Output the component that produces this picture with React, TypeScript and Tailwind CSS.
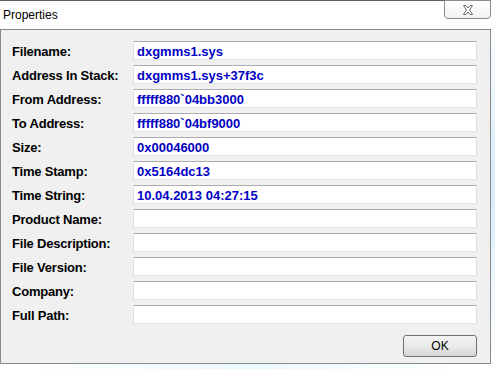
const rows: [string, string][] = [
  ["Filename:", "dxgmms1.sys"],
  ["Address In Stack:", "dxgmms1.sys+37f3c"],
  ["From Address:", "fffff880`04bb3000"],
  ["To Address:", "fffff880`04bf9000"],
  ["Size:", "0x00046000"],
  ["Time Stamp:", "0x5164dc13"],
  ["Time String:", "10.04.2013 04:27:15"],
  ["Product Name:", ""],
  ["File Description:", ""],
  ["File Version:", ""],
  ["Company:", ""],
  ["Full Path:", ""],
];

function CloseGlyph() {
  return (
    <svg width="12" height="10" viewBox="0 0 12 10">
      <path
        d="M1.5 0.5 H4 L6 3 L8 0.5 H10.5 L7.5 5 L10.5 9.5 H8 L6 7 L4 9.5 H1.5 L4.5 5 Z"
        fill="#ffffff"
        stroke="#6b6b6b"
        strokeWidth="1"
        strokeLinejoin="round"
      />
    </svg>
  );
}

export default function App() {
  return (
    <div className="w-[495px] h-[369px] bg-white overflow-hidden font-['Liberation_Sans',Arial,sans-serif] flex flex-col">
      <div className="flex h-[369px]">
        <div className="w-[491px] flex flex-col">
          {/* title bar */}
          <div className="h-[29px] flex items-start justify-between border-t border-[#5e5e5e] bg-white">
            <span className="pl-[3px] pt-[7px] text-[12px] leading-[14px] text-black">Properties</span>
            <div className="w-[47px] h-[19px] -mt-px border border-[#8c8c8c] rounded-b-[4px] bg-gradient-to-b from-white to-[#f3f3f3] flex items-center justify-center">
              <CloseGlyph />
            </div>
          </div>
          {/* client area */}
          <div className="h-[335px] border border-[#8a8a8a] bg-[#f0f0f0] pl-[11px] pr-[13px] pt-[11px] pb-[5px] flex flex-col">
            <div className="flex flex-col gap-[5px]">
              {rows.map(([label, value]) => (
                <div key={label} className="flex items-center h-[19px]">
                  <span className="w-[121px] shrink-0 pt-px text-[13px] leading-[15px] font-bold text-black tracking-[-0.2px]">{label}</span>
                  <div className="flex-1 h-[19px] bg-white border border-[#dbe1e8] border-t-[#abadb3] flex items-center pl-[3px] pt-px">
                    <span className="text-[13px] font-bold text-[#0000c4] leading-[15px]">{value}</span>
                  </div>
                </div>
              ))}
            </div>
            <div className="flex justify-end mt-[11px]">
              <button className="w-[74px] h-[22px] rounded-[3px] border border-[#707070] bg-gradient-to-b from-[#f2f2f2] via-[#ebebeb] to-[#d5d5d5] text-[12px] text-black flex items-center justify-center">
                OK
              </button>
            </div>
          </div>
          <div className="flex-1 bg-gradient-to-r from-white via-[#eafaff] to-white" />
        </div>
        <div className="flex-1 bg-gradient-to-b from-white via-[#d8ecfa] to-white" />
      </div>
    </div>
  );
}
